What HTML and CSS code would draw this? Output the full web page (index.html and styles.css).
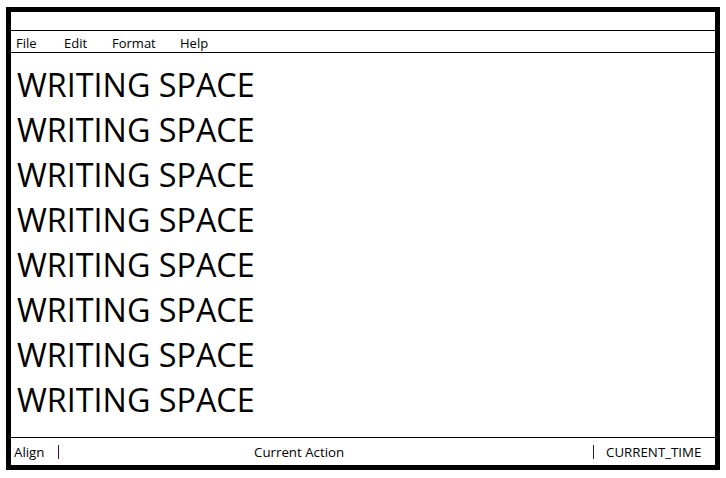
FILE: index.html
```html
<!DOCTYPE html>
<html>
<head>
<meta charset="utf-8">
<link rel="stylesheet" href="styles.css">
</head>
<body>
<div class="window">
  <div class="titlebar"></div>
  <div class="menubar">
    <span class="menu m-file">File</span>
    <span class="menu m-edit">Edit</span>
    <span class="menu m-format">Format</span>
    <span class="menu m-help">Help</span>
  </div>
  <div class="content">
    <div class="line">WRITING SPACE</div>
    <div class="line">WRITING SPACE</div>
    <div class="line">WRITING SPACE</div>
    <div class="line">WRITING SPACE</div>
    <div class="line">WRITING SPACE</div>
    <div class="line">WRITING SPACE</div>
    <div class="line">WRITING SPACE</div>
    <div class="line">WRITING SPACE</div>
  </div>
  <div class="statusbar">
    <div class="status-left"><span>Align</span><span class="sep sep-purple"></span></div>
    <div class="status-mid">Current Action</div>
    <div class="status-right"><span class="sep sep-dark"></span><span>CURRENT_TIME</span></div>
  </div>
</div>
</body>
</html>
```
FILE: styles.css
```css
html, body {
  margin: 0;
  padding: 0;
  background: #ffffff;
}
body {
  font-family: "Open Sans", "Noto Sans", sans-serif;
  color: #000;
}
.window {
  box-sizing: border-box;
  margin: 7px 0 0 6px;
  width: 714px;
  height: 463px;
  border: 5px solid #000;
  display: flex;
  flex-direction: column;
}
.titlebar {
  height: 18px;
  border-bottom: 1px solid #000;
  flex: none;
}
.menubar {
  height: 22px;
  border-bottom: 1px solid #000;
  display: flex;
  align-items: center;
  padding-top: 2px;
  box-sizing: border-box;
  font-size: 13px;
  flex: none;
}
.menu {
  display: inline-block;
}
.m-file { margin-left: 5px; width: 48px; }
.m-edit { width: 48px; }
.m-format { width: 68px; }
.content {
  flex: 1;
  padding: 9px 0 0 6px;
}
.line {
  font-size: 32.3px;
  line-height: 45px;
  height: 45px;
}
.statusbar {
  height: 27px;
  border-top: 1px solid #000;
  display: flex;
  align-items: center;
  font-size: 13.3px;
  flex: none;
}
.status-left {
  width: 200px;
  padding-left: 3px;
  display: flex;
  align-items: center;
}
.status-mid {
  width: 379px;
  padding-left: 40px;
  box-sizing: border-box;
}
.status-right {
  display: flex;
  align-items: center;
}
.sep {
  display: inline-block;
  width: 1px;
  height: 14px;
}
.sep-purple { background: #3a0a5a; margin-left: 13px; }
.sep-dark { background: #222; margin-right: 12px; }
```
